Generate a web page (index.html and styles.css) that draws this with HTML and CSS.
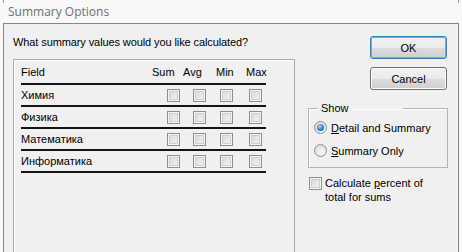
FILE: index.html
```html
<!DOCTYPE html>
<html lang="en">
<head>
    <meta charset="UTF-8">
    <title>Summary Options</title>
    <link rel="stylesheet" href="styles.css">
</head>
<body>
    <div class="titlebar">
        <span class="title">Summary Options</span>
    </div>

    <div class="dialog">
        <div class="main">
            <p class="prompt">What summary values would you like calculated?</p>
            <div class="fields">
                <div class="row head">
                    <span>Field</span>
                    <span>Sum</span>
                    <span>Avg</span>
                    <span>Min</span>
                    <span>Max</span>
                </div>
                <div class="row">
                    <span>Химия</span>
                    <i class="check"></i><i class="check"></i><i class="check"></i><i class="check"></i>
                </div>
                <div class="row">
                    <span>Физика</span>
                    <i class="check"></i><i class="check"></i><i class="check"></i><i class="check"></i>
                </div>
                <div class="row">
                    <span>Математика</span>
                    <i class="check"></i><i class="check"></i><i class="check"></i><i class="check"></i>
                </div>
                <div class="row">
                    <span>Информатика</span>
                    <i class="check"></i><i class="check"></i><i class="check"></i><i class="check"></i>
                </div>
            </div>
        </div>

        <div class="side">
            <button type="button" class="btn default">OK</button>
            <button type="button" class="btn">Cancel</button>

            <fieldset class="show">
                <legend>Show</legend>
                <label class="choice"><i class="radio on"></i><span><u>D</u>etail and Summary</span></label>
                <label class="choice"><i class="radio"></i><span><u>S</u>ummary Only</span></label>
            </fieldset>

            <label class="percent">
                <i class="check"></i>
                <span>Calculate <u>p</u>ercent of<br>total for sums</span>
            </label>
        </div>
    </div>
</body>
</html>
```

FILE: styles.css
```css
* {
    box-sizing: border-box;
    margin: 0;
    padding: 0;
}

html, body {
    height: 100%;
    overflow: hidden;
}

body {
    font-family: 'Liberation Sans', Arial, sans-serif;
    font-size: 11px;
    color: #000;
    background-color: #f8f8f8;
}

.titlebar {
    height: 23px;
    margin: 0 3px;
    padding: 5px 0 0 5px;
    background-image: linear-gradient(#9a9a9a, #9a9a9a), linear-gradient(#9a9a9a, #9a9a9a);
    background-size: 1px 3px;
    background-position: left top, right top;
    background-repeat: no-repeat;
}

.title {
    font-family: 'Open Sans', 'Noto Sans', sans-serif;
    font-size: 12px;
    line-height: 14px;
    color: #707070;
}

.dialog {
    display: grid;
    grid-template-columns: 282px 140px;
    column-gap: 13px;
    height: 240px;
    margin: 0 3px;
    padding: 0 10px 0 9px;
    background-color: #f0f0f0;
    border: 1px solid #858585;
    border-bottom: none;
}

.prompt {
    margin-top: 11px;
    height: 24px;
    line-height: 14px;
    letter-spacing: -0.1px;
}

.fields {
    height: 200px;
    padding: 0 28px 0 7px;
    border: 1px solid #a9a9a9;
    border-bottom: none;
    box-shadow: inset 1px 1px 0 #fff;
}

.row {
    display: grid;
    grid-template-columns: 146px 26px 27px 29px 18px;
    align-items: center;
    height: 22px;
    border-bottom: 2px solid #141414;
}

.row.head {
    grid-template-columns: 131px 31px 33px 30px 21px;
    height: 25px;
}

.check {
    display: block;
    width: 13px;
    height: 13px;
    border: 1px solid #8f8f8f;
    background: linear-gradient(135deg, #d6d6d6, #f7f7f7);
    box-shadow: inset 0 0 0 1px #f4f4f4, inset 0 0 0 2px #cfcfcf;
}

.side {
    display: flex;
    flex-direction: column;
    padding-top: 12px;
}

.btn {
    align-self: flex-end;
    width: 77px;
    height: 23px;
    margin-right: 1px;
    margin-bottom: 8px;
    font: inherit;
    color: #000;
    border: 1px solid #707070;
    border-radius: 3px;
    background: linear-gradient(#f2f2f2 0%, #ebebeb 50%, #dddddd 51%, #cfcfcf 100%);
    box-shadow: inset 0 0 0 1px #fcfcfc;
}

.btn.default {
    border-color: #3c7fb1;
    box-shadow: inset 0 0 0 1px #48c0f0;
}

.show {
    margin-top: 4px;
    height: 66px;
    padding: 1px 0 0 5px;
    border: 1px solid #b4b4b4;
    box-shadow: inset 1px 1px 0 #fff;
}

.show legend {
    width: 85px;
    margin-left: 4px;
    padding-left: 3px;
    line-height: 13px;
}

.choice {
    display: flex;
    align-items: center;
    gap: 4px;
    height: 23px;
}

.radio {
    position: relative;
    display: block;
    width: 13px;
    height: 13px;
    border: 1px solid #8e8f8f;
    border-radius: 50%;
    background: radial-gradient(circle at 60% 65%, #f8f8f8, #d4d4d4);
}

.radio.on::after {
    content: '';
    position: absolute;
    left: 2px;
    top: 2px;
    width: 7px;
    height: 7px;
    border-radius: 50%;
    background: radial-gradient(circle at 40% 35%, #9fdcfa, #1d78c0 60%, #0d4d8a);
}

.percent {
    display: flex;
    align-items: flex-start;
    gap: 3px;
    margin-top: 8px;
    margin-left: 1px;
    line-height: 14px;
}

.percent .check {
    margin-top: 1px;
}
```
